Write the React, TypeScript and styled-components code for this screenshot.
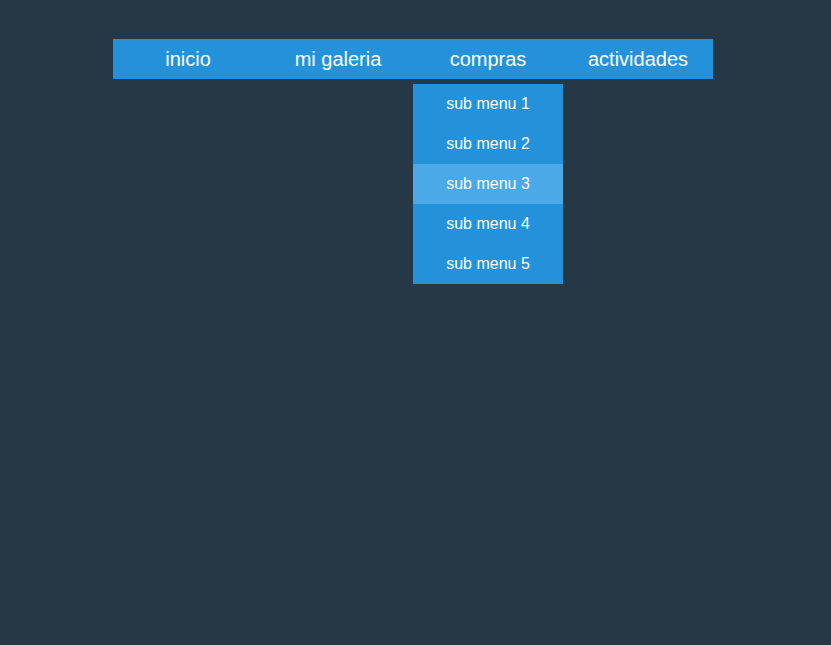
import React from "react";
import styled, { createGlobalStyle } from "styled-components";

const GlobalStyle = createGlobalStyle`
  html, body {
    margin: 0;
    padding: 0;
    background: #263746;
    font-family: "Liberation Sans", Arial, sans-serif;
  }
`;

const Page = styled.div`
  min-height: 645px;
  padding: 39px 0 0 113px;
  box-sizing: border-box;
`;

const Nav = styled.ul`
  display: flex;
  width: 600px;
  margin: 0;
  padding: 0;
  list-style: none;
  background: #2492db;
`;

const NavItem = styled.li`
  position: relative;
  width: 150px;
  height: 40px;
  display: flex;
  align-items: center;
  justify-content: center;
  color: #fff;
  font-size: 20px;
`;

const Dropdown = styled.ul`
  position: absolute;
  top: 45px;
  left: 0;
  width: 150px;
  margin: 0;
  padding: 0;
  list-style: none;
  background: #2492db;
`;

const SubItem = styled.li<{ $active?: boolean }>`
  height: 40px;
  display: flex;
  align-items: center;
  justify-content: center;
  color: #fff;
  font-size: 16px;
  padding-bottom: 1px;
  box-sizing: border-box;
  background: ${(p) => (p.$active ? "#4aa9e6" : "#2492db")};
`;

const items = ["inicio", "mi galeria", "compras", "actividades"];
const subs = ["sub menu 1", "sub menu 2", "sub menu 3", "sub menu 4", "sub menu 5"];

export default function App() {
  return (
    <>
      <GlobalStyle />
      <Page>
        <Nav>
          {items.map((it) => (
            <NavItem key={it}>
              {it}
              {it === "compras" && (
                <Dropdown>
                  {subs.map((s, i) => (
                    <SubItem key={s} $active={i === 2}>
                      {s}
                    </SubItem>
                  ))}
                </Dropdown>
              )}
            </NavItem>
          ))}
        </Nav>
      </Page>
    </>
  );
}
